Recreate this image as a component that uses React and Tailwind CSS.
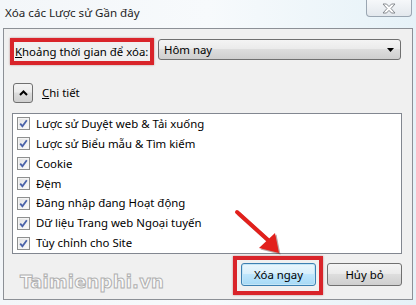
import React from "react";

const items = [
  "Lược sử Duyệt web & Tải xuống",
  "Lược sử Biểu mẫu & Tìm kiếm",
  "Cookie",
  "Đệm",
  "Đăng nhập đang Hoạt động",
  "Dữ liệu Trang web Ngoại tuyến",
  "Tùy chỉnh cho Site",
];

function Check() {
  return (
    <div className="w-[13px] h-[13px] border border-[#8e8f8f] bg-gradient-to-br from-[#dcdcdc] to-[#fbfbfb] flex items-center justify-center shrink-0">
      <div className="w-[11px] h-[11px] border border-[#f4f4f4] bg-gradient-to-br from-[#e4e4e4] to-[#fafafa] flex items-center justify-center">
        <svg width="9" height="9" viewBox="0 0 9 9">
          <path d="M1.2 4.6 L3.4 7.2 L7.8 1.2" fill="none" stroke="#4a62a8" strokeWidth="1.8" />
        </svg>
      </div>
    </div>
  );
}

export default function App() {
  return (
    <div
      className="relative w-[416px] h-[305px] overflow-hidden bg-gradient-to-r from-[#f3f6f9] via-[#f7fafc] to-[#e6f2f8] text-[11.4px] text-black"
      style={{ fontFamily: '"Noto Sans", "Open Sans", sans-serif' }}
    >
      {/* title bar */}
      <div className="flex h-[28px]">
        <div className="pl-[5px] pt-[5px] leading-[16px] text-[11.6px] text-[#1e1e1e]">Xóa các Lược sử Gần đây</div>
        <div className="ml-auto mr-[4px] w-[46px] h-[17px] border border-t-0 border-[#9aa6b2] rounded-b-[4px] bg-gradient-to-b from-[#f6f8fa] to-[#e3e8ed] flex items-center justify-center">
          <svg width="14" height="11" viewBox="0 0 14 11">
            <path
              d="M1 1 H4.5 L7 3.6 L9.5 1 H13 L9 5.5 L13 10 H9.5 L7 7.4 L4.5 10 H1 L5 5.5 Z"
              fill="#ffffff"
              stroke="#7a7f85"
              strokeWidth="0.9"
              strokeLinejoin="round"
            />
          </svg>
        </div>
      </div>

      {/* content panel */}
      <div className="mx-[3px] mr-[3px] h-[272px] border border-[#8c9096] bg-[#f0f0f0] flex flex-col">
        {/* row 1 */}
        <div className="flex items-start mt-[9px] ml-[6px]">
          <div className="h-[27px] w-[144px] border-[4px] border-[#d9242a] flex items-center pl-[1px] shadow-[0_0_2px_rgba(120,0,0,0.4)]">
            <span className="whitespace-nowrap leading-[16px]">
              <span className="underline">K</span>hoảng thời gian để xóa:
            </span>
          </div>
          <div className="ml-[4px] mt-[1px] w-[243px] h-[21px] border border-[#707070] rounded-[3px] bg-[linear-gradient(to_bottom,#f4f4f4_0%,#ebebeb_45%,#dddddd_50%,#cfcfcf_100%)] flex items-center pl-[5px] pr-[6px]">
            <span className="leading-[16px]">Hôm nay</span>
            <svg className="ml-auto" width="7" height="4" viewBox="0 0 7 4">
              <path d="M0 0 H7 L3.5 4 Z" fill="#000" />
            </svg>
          </div>
        </div>

        {/* row 2 */}
        <div className="flex items-center mt-[18px] ml-[9px]">
          <div className="w-[20px] h-[20px] border border-[#707070] rounded-[3px] bg-[linear-gradient(to_bottom,#f4f4f4_0%,#ebebeb_45%,#dddddd_50%,#cfcfcf_100%)] flex items-center justify-center">
            <svg width="9" height="6" viewBox="0 0 9 6">
              <path d="M1 5 L4.5 1.5 L8 5" fill="none" stroke="#000" strokeWidth="2" />
            </svg>
          </div>
          <span className="ml-[9px] leading-[16px]">
            <span className="underline">C</span>hi tiết
          </span>
        </div>

        {/* list */}
        <div className="mt-[10px] ml-[8px] w-[390px] h-[141px] border border-[#828790] bg-white flex flex-col">
          {items.map((t) => (
            <div key={t} className="h-[20px] flex items-center pl-[4px]">
              <Check />
              <span className="ml-[6px] leading-[16px] whitespace-nowrap">{t}</span>
            </div>
          ))}
        </div>

        {/* buttons */}
        <div className="flex items-start justify-end mt-[2px] pr-[10px]">
          <div className="border-[4px] border-[#d9242a] pl-[4px] pr-[3px] pt-[3px] pb-[5px] shadow-[0_0_2px_rgba(120,0,0,0.4)]">
            <div className="w-[75px] h-[23px] border border-[#3c7fb1] rounded-[3px] bg-[linear-gradient(to_bottom,#eaf6fd_0%,#d9f0fc_45%,#bee6fd_50%,#a7d9f5_100%)] shadow-[inset_0_0_0_1px_#c4e5f6] flex items-center justify-center">
              <span className="leading-[16px]">Xóa ngay</span>
            </div>
          </div>
          <div className="ml-[4px] mt-[7px] w-[75px] h-[23px] border border-[#707070] rounded-[3px] bg-[linear-gradient(to_bottom,#f4f4f4_0%,#ebebeb_45%,#dddddd_50%,#cfcfcf_100%)] flex items-center justify-center">
            <span className="leading-[16px]">Hủy bỏ</span>
          </div>
        </div>
      </div>

      {/* watermark */}
      <div
        className="absolute left-[20px] top-[272px] text-[18px] font-bold tracking-[0.2px] text-[#fbfbfb] [-webkit-text-stroke:1px_#b0b0b0] leading-[20px]"
        style={{ fontFamily: '"DejaVu Sans", sans-serif' }}
      >
        Taimienphi.vn
      </div>

      {/* red arrow */}
      <svg className="absolute left-0 top-0 pointer-events-none" width="416" height="305" viewBox="0 0 416 305">
        <g transform="translate(1.5,1.5)" opacity="0.35">
          <line x1="237" y1="212" x2="268" y2="240" stroke="#400" strokeWidth="4" />
          <path d="M259 248 L279 253 L275 233 Z" fill="#400" />
        </g>
        <line x1="237" y1="212" x2="268" y2="240" stroke="#e2201c" strokeWidth="4" strokeLinecap="round" />
        <path d="M259 248 L279 253 L275 233 Z" fill="#e2201c" />
      </svg>
    </div>
  );
}
